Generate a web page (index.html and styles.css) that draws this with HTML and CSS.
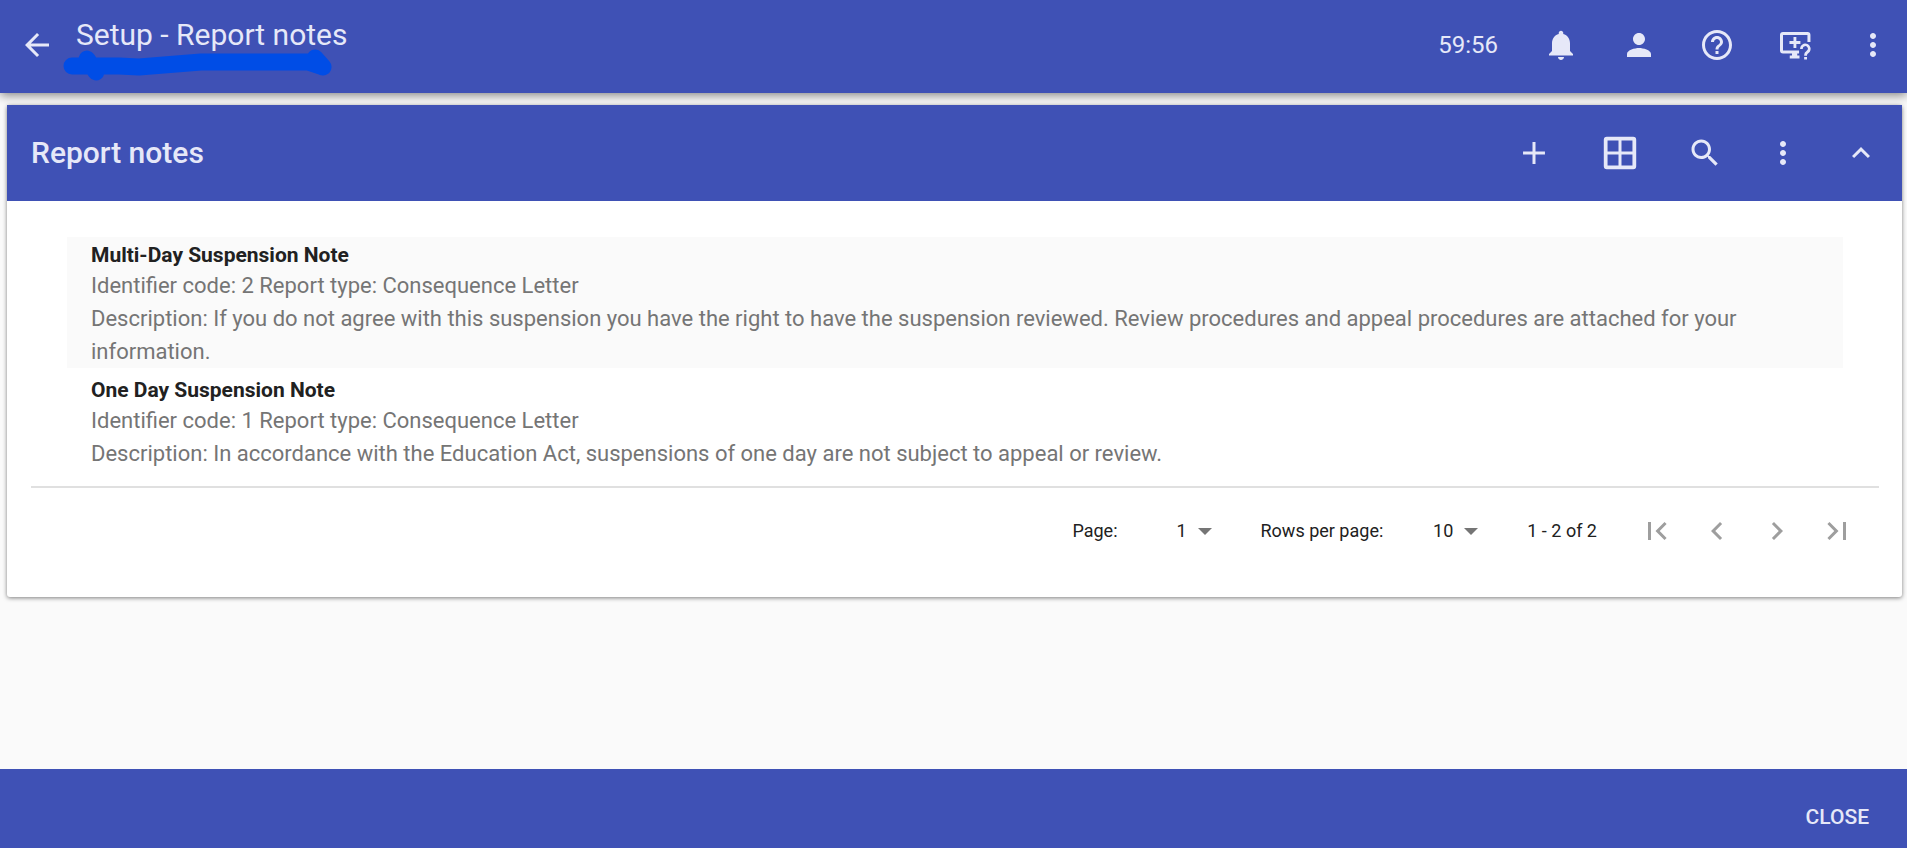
FILE: index.html
```html
<!DOCTYPE html>
<html lang="en">
<head>
<meta charset="utf-8">
<title>Setup - Report notes</title>
<link rel="stylesheet" href="styles.css">
</head>
<body>
<header class="topbar">
  <button class="icon-btn" aria-label="Back"><svg class="icon" viewBox="0 0 24 24"><path d="M20 11H7.83l5.59-5.59L12 4l-8 8 8 8 1.41-1.41L7.83 13H20v-2z"/></svg></button>
  <div class="topbar-title">
    <h1>Setup - Report notes</h1>
    <svg class="scribble" viewBox="0 0 270 32" aria-hidden="true"><path d="M9 17H56L76 18 138 13H245L260 18M24 10 33 23M252 9 260 18"/></svg>
  </div>
  <div class="topbar-actions">
    <span class="timer">59:56</span>
    <button class="icon-btn" aria-label="Notifications"><svg class="icon" viewBox="0 0 24 24"><path d="M12 22c1.1 0 2-.9 2-2h-4c0 1.1.9 2 2 2zm6-6v-5c0-3.07-1.63-5.64-4.5-6.32V4c0-.83-.67-1.5-1.5-1.5s-1.5.67-1.5 1.5v.68C7.64 5.36 6 7.92 6 11v5l-2 2v1h16v-1l-2-2z"/></svg></button>
    <button class="icon-btn" aria-label="Account"><svg class="icon" viewBox="0 0 24 24"><path d="M12 12c2.21 0 4-1.79 4-4s-1.79-4-4-4-4 1.79-4 4 1.79 4 4 4zm0 2c-2.67 0-8 1.34-8 4v2h16v-2c0-2.66-5.33-4-8-4z"/></svg></button>
    <button class="icon-btn" aria-label="Help"><svg class="icon" viewBox="0 0 24 24"><path d="M11 18h2v-2h-2v2zm1-16C6.48 2 2 6.48 2 12s4.48 10 10 10 10-4.48 10-10S17.52 2 12 2zm0 18c-4.41 0-8-3.59-8-8s3.59-8 8-8 8 3.59 8 8-3.59 8-8 8zm0-14c-2.21 0-4 1.79-4 4h2c0-1.1.9-2 2-2s2 .9 2 2c0 2-3 1.75-3 5h2c0-2.25 3-2.5 3-5 0-2.21-1.79-4-4-4z"/></svg></button>
    <button class="icon-btn" aria-label="Remote support"><svg class="icon" viewBox="0 0 24 24"><path d="M4 3.300h16.300a2 2 0 0 1 2 2V10h-2V5.300H4V15.700h10.700v2h-1.200v1.300h1.500v2H8.500v-2H10v-1.300H4a2 2 0 0 1-2-2V5.300a2 2 0 0 1 2-2zM11 6.700h1.900v2.700h2.700v1.900h-2.700v2.700H11v-2.700H8.300V9.400H11zM15.400 14.600a3.500 3.500 0 1 1 5.800 2.600c-.8.700-1.200 1-1.200 2h-1.900c0-1.900.8-2.500 1.700-3.300a1.700 1.700 0 1 0-2.600-1.300zM18.100 20h1.900v1.700h-1.900z"/></svg></button>
    <button class="icon-btn" aria-label="More"><svg class="icon" viewBox="0 0 24 24"><path d="M12 8c1.100 0 2-.9 2-2s-.9-2-2-2-2 .9-2 2 .9 2 2 2zm0 2c-1.100 0-2 .9-2 2s.9 2 2 2 2-.9 2-2-.9-2-2-2zm0 6c-1.100 0-2 .9-2 2s.9 2 2 2 2-.9 2-2-.9-2-2-2z"/></svg></button>
  </div>
</header>
<main class="content">
  <section class="card">
    <div class="card-header">
      <h2>Report notes</h2>
      <div class="card-actions">
        <button class="icon-btn" aria-label="Add"><svg class="icon" viewBox="0 0 24 24"><path d="M19.300 13H13v6.300h-2V13H4.700v-2H11V4.700h2V11h6.300z"/></svg></button>
        <button class="icon-btn wide" aria-label="Grid"><svg class="icon" viewBox="0 0 24 24"><path fill-rule="evenodd" d="M3.200 1.200h17.600a2 2 0 0 1 2 2v17.600a2 2 0 0 1-2 2H3.200a2 2 0 0 1-2-2V3.200a2 2 0 0 1 2-2zM3.700 3.700V11H11V3.700zM13 3.700V11h7.300V3.700zM3.700 13v7.300H11V13zM13 13v7.300h7.300V13z"/></svg></button>
        <button class="icon-btn" aria-label="Search"><svg class="icon" viewBox="0 0 24 24"><path d="M15.500 14h-.79l-.28-.27C15.410 12.590 16 11.110 16 9.500 16 5.910 13.090 3 9.500 3S3 5.910 3 9.500 5.910 16 9.500 16c1.610 0 3.090-.59 4.230-1.570l.27.28v.79l5 4.990L20.490 19l-4.990-5zm-6 0C7.010 14 5 11.990 5 9.500S7.010 5 9.500 5 14 7.010 14 9.500 11.990 14 9.500 14z"/></svg></button>
        <button class="icon-btn" aria-label="More options"><svg class="icon" viewBox="0 0 24 24"><path d="M12 8c1.100 0 2-.9 2-2s-.9-2-2-2-2 .9-2 2 .9 2 2 2zm0 2c-1.100 0-2 .9-2 2s.9 2 2 2 2-.9 2-2-.9-2-2-2zm0 6c-1.100 0-2 .9-2 2s.9 2 2 2 2-.9 2-2-.9-2-2-2z"/></svg></button>
        <button class="icon-btn" aria-label="Collapse"><svg class="icon" viewBox="0 0 24 24"><path d="M12 8l-6 6 1.410 1.410L12 10.830l4.590 4.580L18 14z"/></svg></button>
      </div>
    </div>
    <div class="card-body">
      <ul class="notes">
        <li class="note">
          <h3>Multi-Day Suspension Note</h3>
          <p>Identifier code: 2 Report type: Consequence Letter</p>
          <p>Description: If you do not agree with this suspension you have the right to have the suspension reviewed. Review procedures and appeal procedures are attached for your information.</p>
        </li>
        <li class="note">
          <h3>One Day Suspension Note</h3>
          <p>Identifier code: 1 Report type: Consequence Letter</p>
          <p>Description: In accordance with the Education Act, suspensions of one day are not subject to appeal or review.</p>
        </li>
      </ul>
      <nav class="pager" aria-label="Pagination">
        <label for="page">Page:</label>
        <span class="picker"><select id="page"><option>1</option></select></span>
        <label for="rows">Rows per page:</label>
        <span class="picker"><select id="rows"><option>10</option></select></span>
        <span class="range">1 - 2 of 2</span>
        <div class="pager-buttons">
          <button class="icon-btn" aria-label="First page"><svg class="icon" viewBox="0 0 24 24"><path d="M18.410 16.590L13.820 12l4.590-4.590L17 6l-6 6 6 6zM6 6h2v12H6z"/></svg></button>
          <button class="icon-btn" aria-label="Previous page"><svg class="icon" viewBox="0 0 24 24"><path d="M15.410 7.410L14 6l-6 6 6 6 1.410-1.410L10.830 12z"/></svg></button>
          <button class="icon-btn" aria-label="Next page"><svg class="icon" viewBox="0 0 24 24"><path d="M10 6L8.590 7.410 13.170 12l-4.580 4.590L10 18l6-6z"/></svg></button>
          <button class="icon-btn" aria-label="Last page"><svg class="icon" viewBox="0 0 24 24"><path d="M5.590 7.410L10.180 12l-4.590 4.590L7 18l6-6-6-6zM16 6h2v12h-2z"/></svg></button>
        </div>
      </nav>
    </div>
  </section>
</main>
<footer class="bottombar"><button class="close">CLOSE</button></footer>
</body>
</html>
```
FILE: styles.css
```css
* { box-sizing: border-box; }
body {
  margin: 0;
  min-height: 100vh;
  display: flex;
  flex-direction: column;
  background: #fafafa;
  color: #212121;
  font-family: Roboto, sans-serif;
}
h1, h2, h3, p, ul { margin: 0; padding: 0; }
button { border: 0; padding: 0; background: none; color: inherit; font: inherit; cursor: pointer; }
.icon-btn { display: flex; align-items: center; justify-content: center; width: 36px; height: 36px; }
.icon { width: 36px; height: 36px; fill: currentColor; }

.topbar {
  display: flex;
  align-items: center;
  height: 93px;
  padding: 0 16px 4px 19px;
  background: #3f51b5;
  color: #e6e8f8;
  box-shadow: 0 2px 10px rgba(0, 0, 0, .5);
}
.topbar-title { position: relative; margin-left: 21px; padding-bottom: 20px; }
.topbar-title h1 { font-size: 30px; line-height: 36px; font-weight: 400; }
.scribble { position: absolute; left: -13px; top: 32px; width: 270px; height: 32px; }
.scribble path { fill: none; stroke: #004de6; stroke-width: 17px; stroke-linecap: round; stroke-linejoin: round; }
.topbar-actions { display: flex; align-items: center; gap: 42px; margin-left: auto; }
.timer { margin-right: 3px; font-size: 24px; line-height: 36px; }

.content { flex: 1; padding: 12px 5px 0 7px; }
.card { border-radius: 3px; background: #fff; box-shadow: 0 1px 4px rgba(0, 0, 0, .5); }
.card-header {
  display: flex;
  align-items: center;
  justify-content: space-between;
  height: 96px;
  padding: 0 23px 0 24px;
  background: #3f51b5;
  color: #e6e8f8;
}
.card-header h2 { font-size: 30px; line-height: 36px; font-weight: 500; }
.card-actions { display: flex; align-items: center; gap: 42px; }
.wide { margin: 0 7px 0 8px; }

.card-body { padding: 36px 23px 34px 24px; }
.notes { list-style: none; padding: 0 36px 16px 36px; }
.note { padding: 4px 24px 0; }
.note:first-child { background: #fafafa; }
.note:last-child { padding-top: 8px; }
.note h3 { font-size: 21px; line-height: 28px; font-weight: 700; }
.note p { color: #757575; font-size: 22px; line-height: 33px; font-weight: 400; }

.pager {
  display: flex;
  align-items: center;
  justify-content: flex-end;
  padding: 25px 24px 14px 0;
  border-top: 2px solid #e0e0e0;
  font-size: 18px;
  line-height: 36px;
}
.picker { position: relative; margin: 0 49px; }
.picker::after {
  content: "";
  position: absolute;
  right: 0;
  top: 15px;
  border: 7px solid transparent;
  border-top-color: #757575;
  border-bottom: 0;
  pointer-events: none;
}
.picker select {
  appearance: none;
  min-width: 45px;
  border: 0;
  padding: 0 25px 0 0;
  background: none;
  color: inherit;
  font: inherit;
  text-align: right;
  text-align-last: right;
}
.range { margin-right: 42px; }
.pager-buttons { display: flex; gap: 24px; color: #9e9e9e; }

.bottombar {
  display: flex;
  justify-content: flex-end;
  height: 79px;
  padding: 30px 38px 13px;
  background: #3f51b5;
  color: #e6e8f8;
}
.close { font-size: 21px; line-height: 36px; font-weight: 500; }
```
